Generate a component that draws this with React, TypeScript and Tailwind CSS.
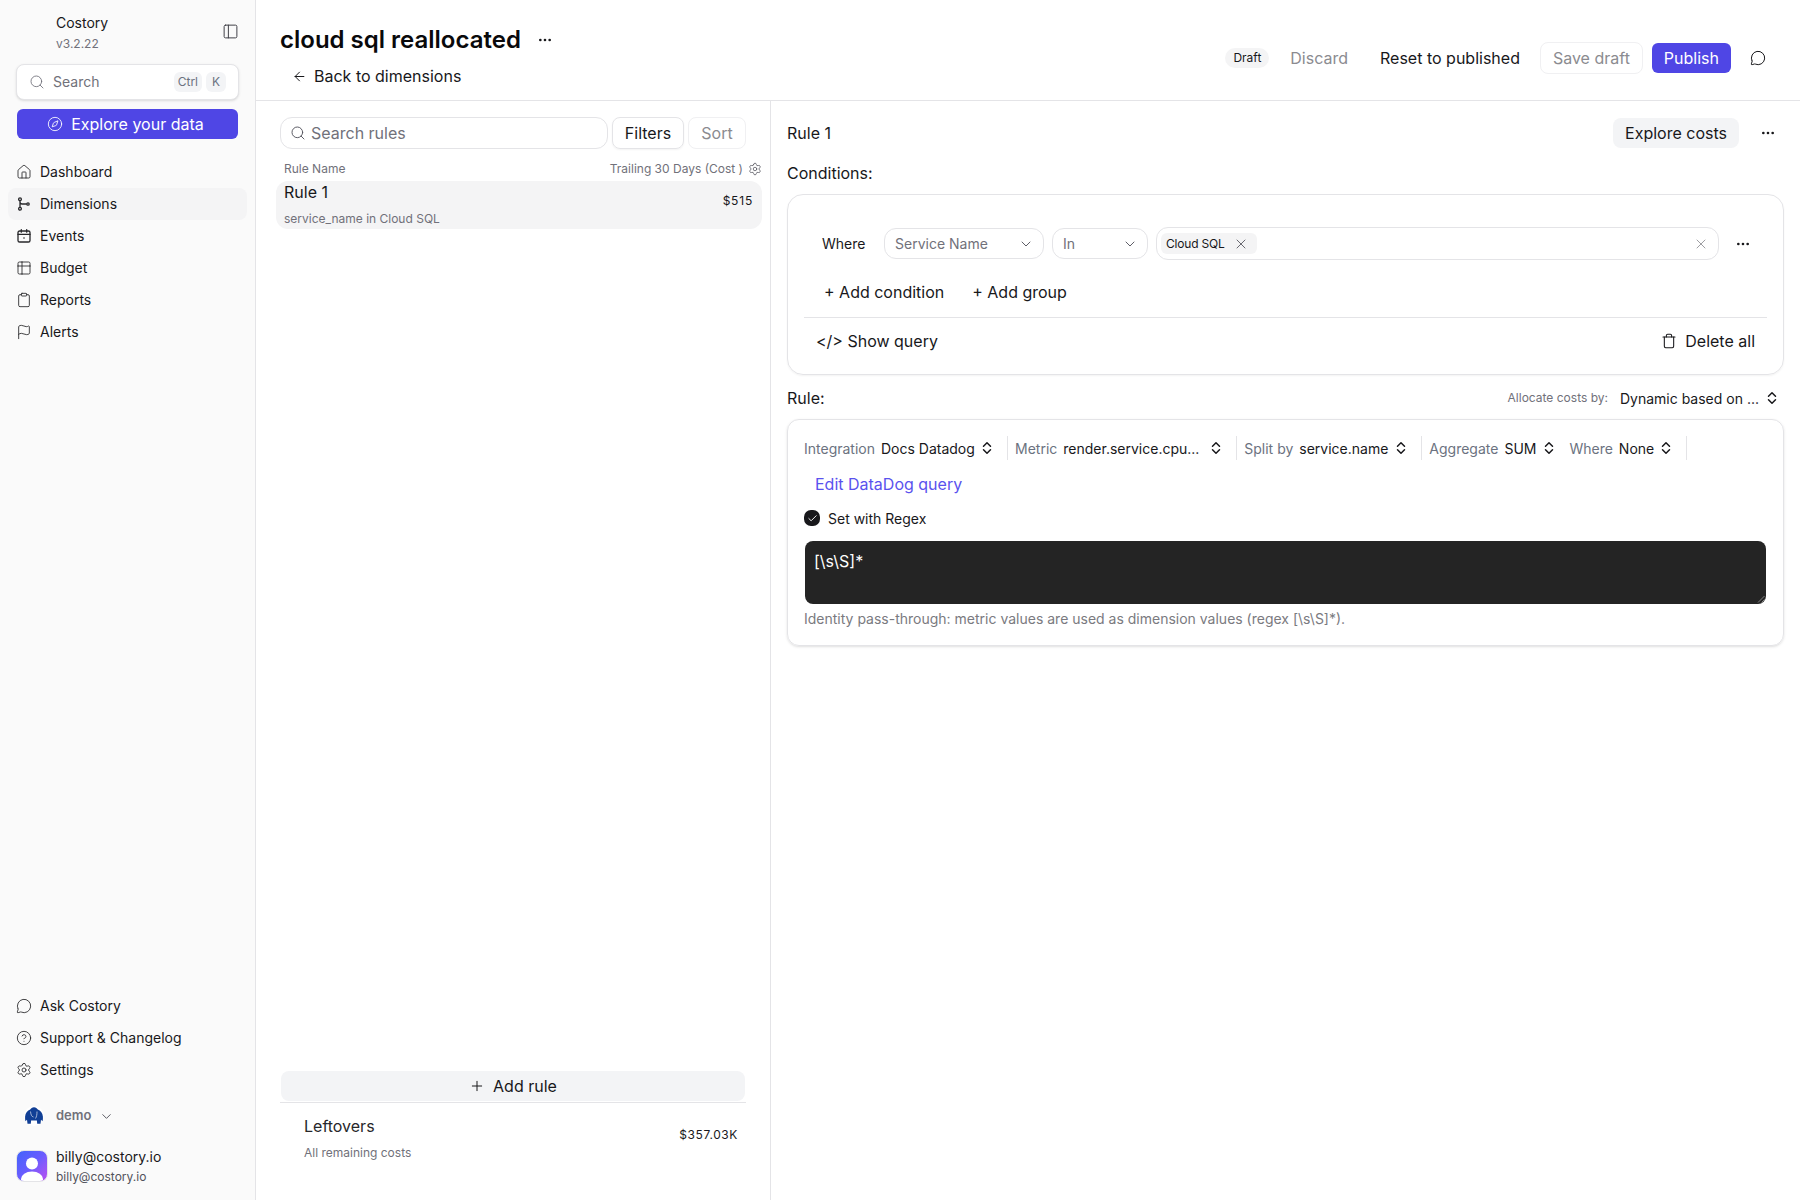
import React from "react";
import {
  House, Table2, Clipboard, Flag, MessageCircle, CircleHelp, Settings, Compass, PanelLeft, Search,
  ArrowLeft, Ellipsis, X, ChevronDown, Trash, Check, Plus,
} from "lucide-react";

function UpDown({ className }: { className?: string }) {
  return (
    <svg width="16" height="16" viewBox="0 0 16 16" fill="none" stroke="currentColor" strokeWidth="1.500" strokeLinecap="round" strokeLinejoin="round" className={`shrink-0 ${className ?? ""}`}>
      <path d="M4.500 6.300L8 2.800l3.500 3.500M4.500 9.700L8 13.200l3.500-3.500" />
    </svg>
  );
}

function DimIcon() {
  return (
    <svg width="16" height="16" viewBox="0 0 16 16" fill="none" stroke="currentColor" strokeWidth="1.3">
      <circle cx="4" cy="3.300" r="1.400" />
      <circle cx="4" cy="12.700" r="1.400" />
      <circle cx="12" cy="8" r="1.200" />
      <path d="M4 4.700v6.600M4 6c0 1.300 1 2 2.200 2h4.600" />
    </svg>
  );
}

function EventIcon() {
  return (
    <svg width="16" height="16" viewBox="0 0 16 16" fill="none" stroke="currentColor" strokeWidth="1.3" strokeLinecap="round">
      <rect x="2" y="3" width="12" height="11" rx="1.600" />
      <path d="M2 6.400h12M5.300 1.600v2.600M10.700 1.600v2.600" />
      <circle cx="8" cy="10" r="0.800" fill="currentColor" stroke="none" />
    </svg>
  );
}

function NavRow({ icon, label, active }: { icon: React.ReactNode; label: string; active?: boolean }) {
  return (
    <div className={`flex items-center h-[32px] rounded-lg pl-[8px] gap-[8px] pb-[1px] text-[14px] text-[#18181b] ${active ? "bg-[#f4f4f5]" : ""}`}>
      <span className="w-[16px] flex justify-center text-[#27272a]">{icon}</span>
      <span>{label}</span>
    </div>
  );
}

function Elephant() {
  return (
    <svg width="20" height="20" viewBox="0 0 20 20">
      <circle cx="10" cy="10" r="10" fill="#ffffff" />
      <path fill="#113f95" d="M10 1.200C8.200 1.200 7 2.200 6.200 3.600 3.600 4.300 1.400 7 1.100 10.500c-.1 1.600 0 3.400.3 4.800l1.600-1.500.5 3.900h3.300l.3-3.200h5.800l.3 3.200h3.300l.5-3.900 1.600 1.500c.3-1.400.4-3.200.3-4.800-.3-3.500-2.500-6.200-5.100-6.900C13 2.200 11.800 1.200 10 1.200z" />
      <path d="M6.500 5.500c.5 3.500 1 5 3 5.500M13 5.500c0 3-.3 5-1.500 7" stroke="#ffffff" strokeWidth="0.600" fill="none" />
    </svg>
  );
}

function Avatar() {
  return (
    <div className="w-[32px] h-[32px] shrink-0 rounded-lg bg-linear-to-br from-[#3f63fb] via-[#6a5cff] to-[#b94cf0] overflow-hidden flex items-end justify-center border border-[#e4e4e7]">
      <svg width="32" height="32" viewBox="0 0 32 32" className="shrink-0">
        <circle cx="16" cy="14.500" r="6" fill="#ffffff" />
        <ellipse cx="16" cy="30" rx="11" ry="7.500" fill="#ffffff" />
      </svg>
    </div>
  );
}

function Sidebar() {
  return (
    <aside className="w-[256px] shrink-0 h-full bg-[#fafafa] border-r border-[#e4e4e7] flex flex-col">
      <div className="flex items-start justify-between pt-[13px] pl-[56px] pr-[16px] h-[52px]">
        <div>
          <div className="text-[14px] leading-[20px] text-[#18181b]">Costory</div>
          <div className="text-[12px] leading-[16px] mt-[3px] text-[#71717a]">v3.2.22</div>
        </div>
        <PanelLeft size={17} strokeWidth={1.4} className="text-[#3f3f46] mt-[10px]" />
      </div>
      <div className="mx-[16px] mt-[12px] h-[36px] rounded-lg border border-[#e4e4e7] bg-white shadow-sm flex items-center pl-[12px] pr-[12px]">
        <Search size={16} strokeWidth={1.3} className="text-[#71717a]" />
        <span className="ml-[8px] pb-[1px] text-[14px] text-[#71717a] flex-1">Search</span>
        <span className="h-[20px] px-[4px] rounded-md bg-[#f3f4f6] text-[12px] leading-[20px] text-[#6b7280]">Ctrl</span>
        <span className="h-[20px] w-[20px] ml-[4px] rounded-md bg-[#f3f4f6] text-[12px] leading-[20px] text-center text-[#6b7280]">K</span>
      </div>
      <div className="mx-[17px] mt-[9px] h-[30px] rounded-md bg-[#4f46e5] text-white flex items-center justify-center gap-[8px] pr-[4px] text-[16px]">
        <Compass size={16} strokeWidth={1.3} />
        <span>Explore your data</span>
      </div>
      <nav className="mx-[8px] mt-[17px] flex flex-col">
        <NavRow icon={<House size={16} strokeWidth={1.3} />} label="Dashboard" />
        <NavRow icon={<DimIcon />} label="Dimensions" active />
        <NavRow icon={<EventIcon />} label="Events" />
        <NavRow icon={<Table2 size={16} strokeWidth={1.3} />} label="Budget" />
        <NavRow icon={<Clipboard size={16} strokeWidth={1.3} />} label="Reports" />
        <NavRow icon={<Flag size={16} strokeWidth={1.3} />} label="Alerts" />
      </nav>
      <div className="flex-1" />
      <nav className="mx-[8px] flex flex-col">
        <NavRow icon={<MessageCircle size={16} strokeWidth={1.3} />} label="Ask Costory" />
        <NavRow icon={<CircleHelp size={16} strokeWidth={1.3} />} label="Support & Changelog" />
        <NavRow icon={<Settings size={16} strokeWidth={1.3} />} label="Settings" />
      </nav>
      <div className="flex items-center mt-[20px] pl-[24px] h-[20px]">
        <Elephant />
        <span className="ml-[12px] text-[13px] font-semibold text-[#71717a]">demo</span>
        <ChevronDown size={15} strokeWidth={1.5} className="ml-[8px] text-[#52525b]" />
      </div>
      <div className="flex items-start h-[32px] mt-[24px] mb-[18px] pl-[16px]">
        <Avatar />
        <div className="ml-[8px] -mt-[3px]">
          <div className="text-[14px] leading-[20px] text-[#18181b]">billy@costory.io</div>
          <div className="text-[12px] leading-[16px] mt-[2px] text-[#52525b]">billy@costory.io</div>
        </div>
      </div>
    </aside>
  );
}

function Header() {
  return (
    <header className="h-[101px] shrink-0 border-b border-[#e4e4e7] flex items-start justify-between pl-[24px] pr-[34px]">
      <div className="pt-[24px]">
        <div className="flex items-center h-[32px]">
          <h1 className="text-[24px] leading-[32px] font-semibold text-[#09090b]">cloud sql reallocated</h1>
          <Ellipsis size={16} className="ml-[16px] text-[#18181b]" />
        </div>
        <div className="flex items-center mt-[8px] ml-[12px] h-[24px] text-[16px] text-[#18181b]">
          <ArrowLeft size={15} strokeWidth={1.6} />
          <span className="ml-[7px]">Back to dimensions</span>
        </div>
      </div>
      <div className="flex items-center h-[30px] mt-[43px]">
        <span className="h-[20px] px-[8px] rounded-full bg-[#f4f4f5] text-[12px] leading-[20px] text-[#18181b]">Draft</span>
        <span className="ml-[21px] text-[16px] text-[#8b8b90]">Discard</span>
        <span className="ml-[32px] text-[16px] text-[#18181b]">Reset to published</span>
        <span className="ml-[20px] h-[32px] px-[12px] rounded-lg border border-[#f0f0f2] text-[16px] leading-[30px] text-[#8b8b90]">Save draft</span>
        <span className="ml-[9px] h-[30px] px-[12px] rounded-md bg-[#4f46e5] text-[16px] leading-[30px] text-white">Publish</span>
        <MessageCircle size={16} strokeWidth={1.5} className="ml-[19px] text-[#18181b]" />
      </div>
    </header>
  );
}

function LeftPanel() {
  return (
    <section className="w-[515px] shrink-0 border-r border-[#e4e4e7] flex flex-col pt-[16px] pl-[24px] pr-[24px]">
      <div className="flex items-center h-[32px]">
        <div className="w-[328px] h-[32px] rounded-xl border border-[#e4e4e7] flex items-center pl-[9px]">
          <Search size={16} strokeWidth={1.4} className="text-[#52525b]" />
          <span className="ml-[5px] text-[16px] text-[#71717a]">Search rules</span>
        </div>
        <div className="ml-[4px] w-[72px] h-[32px] rounded-lg border border-[#e4e4e7] shadow-xs text-center text-[16px] leading-[30px] text-[#18181b]">Filters</div>
        <div className="ml-[4px] w-[58px] h-[32px] rounded-lg border border-[#f0f0f2] text-center text-[16px] leading-[30px] text-[#8b8b90]">Sort</div>
      </div>
      <div className="flex items-center justify-between mt-[12px] h-[16px] pl-[4px] -mr-[16px] text-[12px] text-[#71717a]">
        <span>Rule Name</span>
        <span className="flex items-center gap-[5px]">
          Trailing 30 Days (Cost )
          <Settings size={14} strokeWidth={1.3} className="text-[#52525b]" />
        </span>
      </div>
      <div className="-ml-[4px] -mr-[16px] mt-[4px] h-[48px] rounded-xl bg-[#f4f4f5] pl-[8px] pr-[9px] flex items-start justify-between">
        <div>
          <div className="text-[16px] leading-[22px] text-[#18181b]">Rule 1</div>
          <div className="text-[12px] leading-[16px] mt-[8px] text-[#71717a]">service_name in Cloud SQL</div>
        </div>
        <span className="text-[12px] leading-[16px] mt-[12px] tracking-[0.8px] text-[#18181b]">$515</span>
      </div>
      <div className="flex-1" />
      <div className="h-[30px] pb-[1px] mx-[1px] rounded-lg bg-[#f3f4f6] flex items-center justify-center gap-[8px] text-[16px] text-[#18181b]">
        <Plus size={16} strokeWidth={1.5} />
        <span>Add rule</span>
      </div>
      <div className="border-t border-[#e4e4e7] mt-[1px] h-[98px] pl-[24px] pr-[8px] flex items-start justify-between">
        <div>
          <div className="text-[16px] leading-[24px] mt-[11px] text-[#27272a]">Leftovers</div>
          <div className="text-[12px] leading-[16px] mt-[7px] text-[#71717a]">All remaining costs</div>
        </div>
        <span className="text-[12px] leading-[16px] mt-[24px] tracking-[0.6px] text-[#18181b]">$357.03K</span>
      </div>
    </section>
  );
}

function MetricChip({ label, value, w, divider, last }: { label: string; value: string; w: number; divider?: boolean; last?: boolean }) {
  return (
    <>
      <span className="text-[#6b7280]">{label}</span>
      <span className="ml-[6px] text-[#18181b] whitespace-nowrap" style={{ width: w }}>{value}</span>
      <UpDown className="text-[#18181b]" />
      {divider ? <span className={`w-px h-[24px] bg-[#e4e4e7] ${last ? "ml-[12px]" : "ml-[12px] mr-[7px]"}`} /> : <span className="w-[12px]" />}
    </>
  );
}

function RightPanel() {
  return (
    <section className="flex-1 min-w-0 pl-[16px] pr-[16px]">
      <div className="flex items-center justify-between h-[30px] mt-[17px] pr-[8px]">
        <span className="text-[16px] text-[#18181b]">Rule 1</span>
        <div className="flex items-center">
          <span className="h-[30px] w-[126px] rounded-lg bg-[#f3f4f6] text-center text-[16px] leading-[30px] text-[#18181b]">Explore costs</span>
          <Ellipsis size={16} className="ml-[21px] text-[#18181b]" />
        </div>
      </div>
      <div className="text-[16px] leading-[24px] mt-[13px] text-[#18181b]">Conditions:</div>
      <div className="mt-[9px] h-[181px] rounded-2xl border border-[#e4e4e7] shadow-xs px-[16px] pt-[32px]">
        <div className="flex items-center h-[33px]">
          <span className="ml-[18px] w-[62px] pb-[1px] text-[14px] text-[#18181b]">Where</span>
          <div className="w-[160px] h-[31px] rounded-xl border border-[#e4e4e7] flex items-center justify-between pl-[10px] pr-[9px] text-[14px] text-[#71717a]">
            Service Name <ChevronDown size={16} strokeWidth={1.4} className="text-[#52525b]" />
          </div>
          <div className="ml-[8px] w-[96px] h-[31px] rounded-xl border border-[#e4e4e7] flex items-center justify-between pl-[10px] pr-[9px] text-[14px] text-[#71717a]">
            In <ChevronDown size={16} strokeWidth={1.4} className="text-[#52525b]" />
          </div>
          <div className="ml-[8px] w-[563px] h-[33px] rounded-xl border border-[#e4e4e7] flex items-center justify-between pl-[4px] pr-[9px]">
            <span className="h-[21px] w-[96px] rounded-md bg-[#f4f4f5] flex items-center pl-[5px] gap-[8px] text-[12px] tracking-[-0.2px] text-[#18181b]">
              Cloud SQL <X size={16} strokeWidth={1.3} className="text-[#52525b]" />
            </span>
            <X size={16} strokeWidth={1.3} className="text-[#8e8e93]" />
          </div>
          <Ellipsis size={16} className="ml-[16px] text-[#18181b]" />
        </div>
        <div className="flex items-center h-[24px] mt-[20px] ml-[20px] text-[16px] text-[#18181b]">
          <span>+ Add condition</span>
          <span className="ml-[28px]">+ Add group</span>
        </div>
        <div className="border-t border-[#e4e4e7] mt-[13px] h-[46px] flex items-center justify-between pl-[12px] pr-[12px] text-[16px] text-[#18181b]">
          <span>{"</> Show query"}</span>
          <span className="flex items-center gap-[8px]">
            <Trash size={16} strokeWidth={1.6} /> Delete all
          </span>
        </div>
      </div>
      <div className="flex items-center justify-between h-[24px] mt-[11px]">
        <span className="text-[16px] text-[#18181b]">Rule:</span>
        <div className="flex items-center pr-[4px]">
          <span className="text-[12px] text-[#71717a]">Allocate costs by:</span>
          <span className="ml-[12px] text-[14px] text-[#18181b]">Dynamic based on ...</span>
          <UpDown className="ml-[5px] text-[#18181b]" />
        </div>
      </div>
      <div className="mt-[9px] h-[227px] rounded-xl border border-[#e4e4e7] shadow-sm px-[16px] pt-[16px]">
        <div className="flex items-center h-[24px] text-[14px]">
          <MetricChip label="Integration" value="Docs Datadog" w={98} divider />
          <MetricChip label="Metric" value="render.service.cpu..." w={145} divider />
          <MetricChip label="Split by" value="service.name" w={94} divider />
          <MetricChip label="Aggregate" value="SUM" w={37} />
          <MetricChip label="Where" value="None" w={39} divider last />
        </div>
        <div className="mt-[12px] ml-[11px] h-[24px] text-[16px] leading-[24px] text-[#5a52ee]">Edit DataDog query</div>
        <div className="flex items-center mt-[12px] h-[20px] text-[14px] text-[#18181b]">
          <span className="w-[16px] h-[16px] rounded-[7px] bg-[#18181b] flex items-center justify-center">
            <Check size={11} strokeWidth={2} className="text-white" />
          </span>
          <span className="ml-[8px]">Set with Regex</span>
        </div>
        <div className="relative mx-[1px] mt-[13px] h-[63px] rounded-lg bg-[#242424] pl-[9px] pt-[8px] text-[16px] leading-[24px] text-white">
          {"[\\s\\S]*"}
          <svg width="8" height="8" viewBox="0 0 8 8" className="absolute right-[1px] bottom-[1px]" stroke="#9a9a9a" strokeWidth="0.8">
            <path d="M1 7.500L7.500 1M4.500 7.500L7.500 4.500" />
          </svg>
        </div>
        <div className="mt-[5px] h-[20px] text-[14px] leading-[20px] text-[#7a7a80]">{"Identity pass-through: metric values are used as dimension values (regex [\\s\\S]*)."}</div>
      </div>
    </section>
  );
}

export default function App() {
  return (
    <div className="flex w-[1800px] h-[1200px] bg-white overflow-hidden [font-family:Inter,sans-serif]">
      <Sidebar />
      <main className="flex-1 min-w-0 flex flex-col">
        <Header />
        <div className="flex flex-1 min-h-0">
          <LeftPanel />
          <RightPanel />
        </div>
      </main>
    </div>
  );
}
